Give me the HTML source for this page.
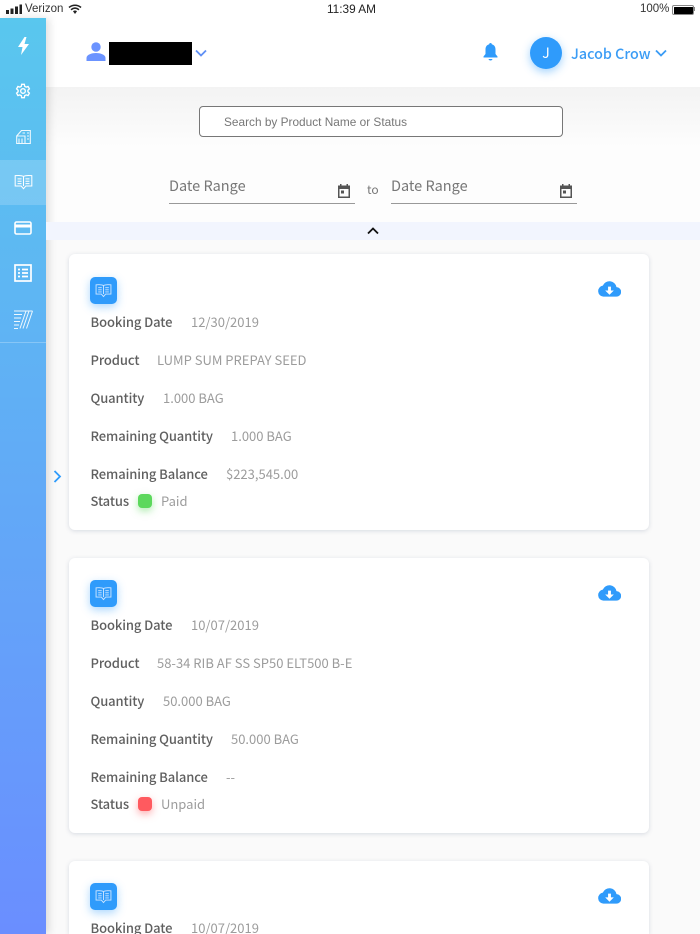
<!DOCTYPE html>
<html style="height:934px;overflow:hidden"><head><meta charset="utf-8"><style>
html,body{margin:0;padding:0}
body{width:700px;height:934px;overflow:hidden;position:relative;background:#fafafa;font-family:"Noto Sans CJK JP","Liberation Sans",sans-serif;color:#666}
.a{position:absolute;white-space:nowrap;line-height:18px}
.card{position:absolute;left:69px;width:580px;background:#fff;border-radius:6px;box-shadow:0 1px 5px rgba(90,110,140,.22)}
.l{position:absolute;left:21.500px;font-size:13px;font-weight:500;color:#5f5f5f;line-height:18px;white-space:nowrap;letter-spacing:-.1px}
.v{position:absolute;font-size:13px;color:#9c9c9c;line-height:18px;white-space:nowrap}
.ic{position:absolute;left:21px;top:23px;width:27px;height:27px;border-radius:5px;background:#2f9bfb;box-shadow:0 3px 9px rgba(47,155,251,.4)}
.dot{position:absolute;left:69px;width:14px;height:14px;border-radius:4px}
</style></head><body>
<svg width="0" height="0" style="position:absolute"><defs>
<symbol id="book" viewBox="0 0 24 20"><path d="M12 3C10 1.800 6 1.500 1.500 2V15H9L12 18.500L15 15H22.500V2C18 1.500 14 1.800 12 3ZM12 3V15M4.500 6H9.500M4.500 9H9.500M4.500 12H9.500M14.500 6H19.500M14.500 9H19.500M14.500 12H19.500" fill="none" stroke="currentColor" stroke-width="1.300"/></symbol>
<symbol id="cloud" viewBox="0 0 24 16"><path d="M19.300 6A7.500 7.500 0 0 0 5 4.500 5.800 5.800 0 0 0 5.500 16H19a5 5 0 0 0 .3-10ZM12 14 7.500 9.500H10.500V5.500H13.500V9.500H16.500Z" fill="#2f9bfb" fill-rule="evenodd"/></symbol>
<symbol id="cal" viewBox="0 0 14 14"><path d="M3 0H4.500V1.500H9.500V0H11V1.500H13V14H1V1.500H3ZM2.500 5V12.500H11.500V5ZM4 6.500H7V9.500H4Z" fill="#555" fill-rule="evenodd"/></symbol>
</defs></svg>

<!-- page background -->
<div style="position:absolute;left:46px;top:87px;width:654px;height:60px;background:linear-gradient(#f3f3f3,#fdfdfd)"></div>
<div style="position:absolute;left:46px;top:147px;width:654px;height:75px;background:#fdfdfd"></div>

<!-- status bar -->
<div style="position:absolute;left:0;top:0;width:700px;height:18px;background:#fff"></div>
<svg class="a" style="left:5px;top:4px" width="17" height="10"><path d="M1 6h3v4H1zM5.500 4.500h3V10h-3zM10 2.500h3V10h-3zM14.500 0.500h2.500V10h-2.500z" fill="#222"/></svg>
<div class="a" style="left:25px;top:0;font:11.500px/18px 'Liberation Sans',sans-serif;color:#333">Verizon</div>
<svg class="a" style="left:68px;top:4px" width="14" height="10" viewBox="0 0 14 10"><path d="M1 3.500C4.500 .5 9.500 .5 13 3.500M3 5.700C5.500 3.700 8.500 3.700 11 5.700" fill="none" stroke="#222" stroke-width="1.600"/><path d="M5 7.300C6.200 6.300 7.800 6.300 9 7.300L7 10Z" fill="#222"/></svg>
<div class="a" style="left:327px;top:0;font:11.800px/18px 'Liberation Sans',sans-serif;color:#222">11:39 AM</div>
<div class="a" style="left:640px;top:0;font:11.500px/18px 'Liberation Sans',sans-serif;color:#333">100%</div>
<div style="position:absolute;left:672px;top:5px;border:1px solid #888;border-radius:2px;background:#000;background-clip:content-box;padding:.5px;box-sizing:content-box;width:19px;height:7px"></div>
<div style="position:absolute;left:693px;top:7px;width:1.500px;height:4px;background:#888"></div>

<!-- header -->
<div style="position:absolute;left:46px;top:18px;width:654px;height:69px;background:#fff"></div>
<svg class="a" style="left:86px;top:41px" width="20" height="20" viewBox="0 0 20 20"><circle cx="10" cy="6" r="4.700" fill="#6b93ff"/><path d="M.5 20V17C.5 13.500 6 12 10 12S19.500 13.500 19.500 17V20Z" fill="#6b93ff"/></svg>
<div style="position:absolute;left:109px;top:42px;width:83px;height:23px;background:#000"></div>
<svg class="a" style="left:195px;top:49px" width="12" height="8" viewBox="0 0 12 8"><path d="M1 1.500 6 6.500 11 1.500" fill="none" stroke="#5f8ff5" stroke-width="1.800"/></svg>
<svg class="a" style="left:483px;top:42px" width="15" height="19" viewBox="0 0 15 19"><path d="M7.500 1C8.300 1 8.800 1.500 8.800 2.300 11.300 3 12.500 5 12.500 7.500V12L14.500 14.500V15.500H.5V14.500L2.500 12V7.500C2.500 5 3.700 3 6.200 2.300 6.200 1.500 6.700 1 7.500 1Z" fill="#2f9bfb"/><path d="M5.500 17H9.500C9.300 18 8.500 18.500 7.500 18.500S5.700 18 5.500 17Z" fill="#2f9bfb"/></svg>
<div style="position:absolute;left:530px;top:37px;width:32px;height:32px;border-radius:50%;background:#2f9bfb;box-shadow:0 3px 9px rgba(47,155,251,.45);color:#fff;font-size:14px;line-height:33px;text-align:center">J</div>
<div class="a" style="left:571px;top:45px;font-size:14.300px;font-weight:500;color:#3a9cf5">Jacob Crow</div>
<svg class="a" style="left:655px;top:49px" width="12" height="8" viewBox="0 0 12 8"><path d="M1 1.500 6 6.500 11 1.500" fill="none" stroke="#3a9cf5" stroke-width="1.800"/></svg>

<!-- sidebar -->
<div style="position:absolute;left:0;top:18px;width:46px;height:916px;background:linear-gradient(#59c7ee,#6a8eff);box-shadow:3px 0 8px rgba(0,0,0,.13)"></div>
<div style="position:absolute;left:0;top:160px;width:46px;height:45px;background:rgba(255,255,255,.17)"></div>
<div style="position:absolute;left:0;top:342px;width:46px;height:1px;background:rgba(255,255,255,.25)"></div>
<svg class="a" style="left:17px;top:37px" width="13" height="18" viewBox="0 0 13 18"><path d="M7.500 0 1 10H5.500L4 18 12 7H7.500L9.500 0Z" fill="#fff"/></svg>
<svg class="a" style="left:15px;top:83px" width="16" height="16" viewBox="0 0 24 24"><path d="M10 2H14L14.600 5A7.500 7.500 0 0 1 16.700 6.200L19.600 5.200 21.600 8.800 19.300 10.800A7.500 7.500 0 0 1 19.300 13.200L21.600 15.200 19.600 18.800 16.700 17.800A7.500 7.500 0 0 1 14.600 19L14 22H10L9.400 19A7.500 7.500 0 0 1 7.300 17.800L4.400 18.800 2.400 15.200 4.700 13.200A7.500 7.500 0 0 1 4.700 10.800L2.400 8.800 4.400 5.200 7.300 6.200A7.500 7.500 0 0 1 9.400 5Z" fill="none" stroke="#fff" stroke-width="2"/><circle cx="12" cy="12" r="3.500" fill="none" stroke="#fff" stroke-width="2"/></svg>
<svg class="a" style="left:16px;top:129px" width="15" height="15" viewBox="0 0 15 15"><path d="M.7 14.500V7L5.500 1.500H14.300V14.500ZM.7 7H9V14.500M3 9.500V14M6 9.500V14M11 4H13M11 7H13M11 10H13M6.500 4H9" fill="none" stroke="#fff" stroke-width="1.100" opacity=".9"/></svg>
<svg class="a" style="left:14px;top:174px;color:#fff" width="19" height="16"><use href="#book"/></svg>
<svg class="a" style="left:14px;top:221px" width="18" height="14" viewBox="0 0 18 14"><rect x="1" y="1" width="16" height="12" rx="1.500" fill="none" stroke="#fff" stroke-width="1.600"/><rect x="1" y="3.500" width="16" height="3" fill="#fff"/></svg>
<svg class="a" style="left:14px;top:264px" width="18" height="18" viewBox="0 0 18 18"><rect x="1" y="1" width="16" height="16" fill="none" stroke="#fff" stroke-width="1.700"/><path d="M4 5.500H6M8 5.500H14M4 9H6M8 9H14M4 12.500H6M8 12.500H14" stroke="#fff" stroke-width="1.700"/></svg>
<svg class="a" style="left:14px;top:310px" width="19" height="19" viewBox="0 0 19 19"><path d="M0 1H18.500M0 4.500H8M0 8H7M0 11.500H6M0 15H5M0 18.500H4M12 1 6 18.500M15 1 9 18.500M18.500 1 12.500 18.500" fill="none" stroke="#fff" stroke-width="1" opacity=".9"/></svg>

<!-- search -->
<div style="position:absolute;left:199px;top:106px;width:362px;height:29px;border:1px solid #777;border-radius:4px;background:#fff"></div>
<div class="a" style="left:224px;top:113px;font:11.850px/18px 'Liberation Sans',sans-serif;color:#777">Search by Product Name or Status</div>

<!-- dates -->
<div class="a" style="left:169px;top:177px;font-size:14.500px;color:#777">Date Range</div>
<svg class="a" style="left:337px;top:184px" width="14" height="14"><use href="#cal"/></svg>
<div style="position:absolute;left:169px;top:203px;width:186px;height:1px;background:#999"></div>
<div class="a" style="left:367px;top:181px;font-size:12px;color:#777">to</div>
<div class="a" style="left:391px;top:177px;font-size:14.500px;color:#777">Date Range</div>
<svg class="a" style="left:559px;top:184px" width="14" height="14"><use href="#cal"/></svg>
<div style="position:absolute;left:391px;top:203px;width:186px;height:1px;background:#999"></div>

<!-- collapse bar -->
<div style="position:absolute;left:46px;top:222px;width:654px;height:18px;background:#f2f5fe"></div>
<svg class="a" style="left:367px;top:227px" width="12" height="8" viewBox="0 0 12 8"><path d="M1 6.500 6 1.500 11 6.500" fill="none" stroke="#111" stroke-width="1.800"/></svg>

<!-- side arrow -->
<svg class="a" style="left:53px;top:470px" width="9" height="13" viewBox="0 0 9 13"><path d="M1.500 1 7 6.500 1.500 12" fill="none" stroke="#2f9bfb" stroke-width="1.800"/></svg>

<!-- card 1 -->
<div class="card" style="top:254px;height:276px">
<div class="ic"><svg style="position:absolute;left:5px;top:6px;color:#cfe6ff" width="17" height="15"><use href="#book"/></svg></div>
<svg style="position:absolute;left:529px;top:27px" width="23" height="16"><use href="#cloud"/></svg>
<div class="l" style="top:59px">Booking Date</div><div class="v" style="left:122px;top:59px">12/30/2019</div>
<div class="l" style="top:97px">Product</div><div class="v" style="left:88px;top:97px">LUMP SUM PREPAY SEED</div>
<div class="l" style="top:135px">Quantity</div><div class="v" style="left:94px;top:135px">1.000 BAG</div>
<div class="l" style="top:173px">Remaining Quantity</div><div class="v" style="left:162px;top:173px">1.000 BAG</div>
<div class="l" style="top:211px">Remaining Balance</div><div class="v" style="left:157px;top:211px">$223,545.00</div>
<div class="l" style="top:238px">Status</div><div class="dot" style="top:240px;background:#5cd85c;box-shadow:0 3px 8px rgba(92,216,92,.5)"></div><div class="v" style="left:92px;top:238px">Paid</div>
</div>

<!-- card 2 -->
<div class="card" style="top:558px;height:275px">
<div class="ic" style="top:22px"><svg style="position:absolute;left:5px;top:6px;color:#cfe6ff" width="17" height="15"><use href="#book"/></svg></div>
<svg style="position:absolute;left:529px;top:27px" width="23" height="16"><use href="#cloud"/></svg>
<div class="l" style="top:58px">Booking Date</div><div class="v" style="left:122px;top:58px">10/07/2019</div>
<div class="l" style="top:96px">Product</div><div class="v" style="left:88px;top:96px">58-34 RIB AF SS SP50 ELT500 B-E</div>
<div class="l" style="top:134px">Quantity</div><div class="v" style="left:94px;top:134px">50.000 BAG</div>
<div class="l" style="top:172px">Remaining Quantity</div><div class="v" style="left:162px;top:172px">50.000 BAG</div>
<div class="l" style="top:210px">Remaining Balance</div><div class="v" style="left:157px;top:210px">--</div>
<div class="l" style="top:237px">Status</div><div class="dot" style="top:239px;background:#ff5a5f;box-shadow:0 3px 8px rgba(255,90,95,.5)"></div><div class="v" style="left:92px;top:237px">Unpaid</div>
</div>

<!-- card 3 -->
<div class="card" style="top:861px;height:73px;border-radius:6px 6px 0 0">
<div class="ic" style="top:22px"><svg style="position:absolute;left:5px;top:6px;color:#cfe6ff" width="17" height="15"><use href="#book"/></svg></div>
<svg style="position:absolute;left:529px;top:27px" width="23" height="16"><use href="#cloud"/></svg>
<div class="l" style="top:58px;height:15px;overflow:hidden">Booking Date</div><div class="v" style="left:122px;top:58px;height:15px;overflow:hidden">10/07/2019</div>
</div>
</body></html>
